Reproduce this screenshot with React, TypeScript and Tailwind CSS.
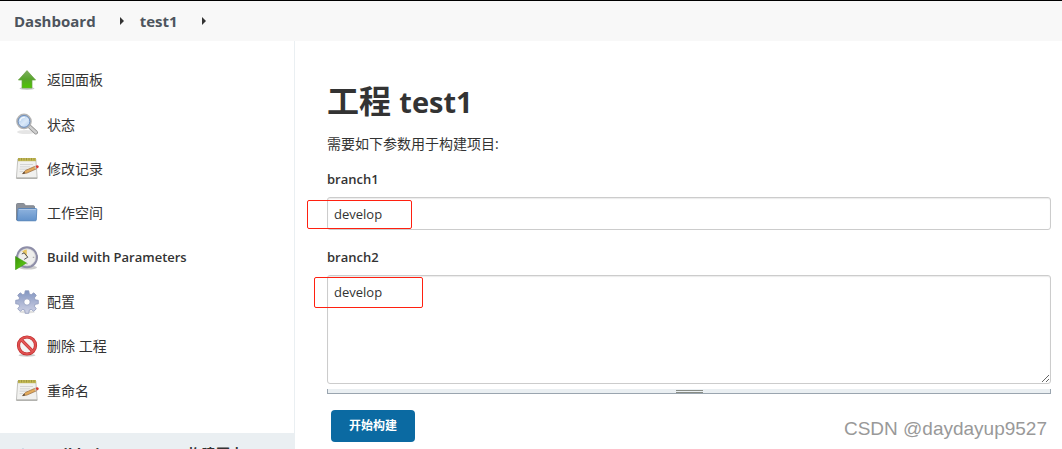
import type { ReactNode } from "react";

function ArrowUpIcon() {
  return (
    <svg className="size-6" viewBox="0 0 24 24" aria-hidden="true">
      <defs>
        <linearGradient id="up" x1="0" y1="0" x2="0" y2="1">
          <stop offset="0" stopColor="#7fae5f" />
          <stop offset="0.5" stopColor="#57a52a" />
          <stop offset="1" stopColor="#4fc700" />
        </linearGradient>
      </defs>
      <ellipse cx="12" cy="20.5" rx="7.5" ry="1.4" fill="#000" opacity="0.2" />
      <path d="M12 2.6 20.6 12H17v8H7v-8H3.4z" fill="url(#up)" stroke="#6ba348" strokeWidth="0.7" />
    </svg>
  );
}

function SearchIcon() {
  return (
    <svg className="size-6" viewBox="0 0 24 24" aria-hidden="true">
      <defs>
        <linearGradient id="lens" x1="0" y1="0" x2="1" y2="1">
          <stop offset="0" stopColor="#9cc1ea" />
          <stop offset="0.55" stopColor="#dbe9f9" />
          <stop offset="1" stopColor="#a3c4ea" />
        </linearGradient>
      </defs>
      <ellipse cx="11" cy="19" rx="9" ry="2" fill="#000" opacity="0.1" />
      <path d="m14.500 13.500 6.500 6" stroke="#8a8a8a" strokeWidth="4" strokeLinecap="round" />
      <path d="m14.500 13.500 6.500 6" stroke="#cfcfcf" strokeWidth="2.400" strokeLinecap="round" />
      <circle cx="9" cy="8.400" r="6.800" fill="url(#lens)" stroke="#b3b3b3" strokeWidth="2" />
      <circle cx="9" cy="8.400" r="5.900" fill="none" stroke="#6288bd" strokeWidth="0.9" />
      <path d="M5 8c.4-2.400 2.200-3.800 4.800-3.700" fill="none" stroke="#fff" strokeWidth="1.200" opacity="0.8" />
    </svg>
  );
}

function NotepadIcon() {
  return (
    <svg className="size-6" viewBox="0 0 24 24" aria-hidden="true">
      <path d="M2.800 2h18l1.400 19.300H1.400z" fill="#f1f1ef" stroke="#bdbdba" strokeWidth="0.9" />
      <path d="M1.500 20.500h20.600v1.200H1.500z" fill="#a5a5a1" />
      <path d="M3 1h18v3.200H3z" fill="#c3b955" />
      <path d="M4 1v2.400M6.500 1v2.400M9 1v2.400M11.500 1v2.400M14 1v2.400M16.500 1v2.400M19 1v2.400" stroke="#958d3c" strokeWidth="0.8" />
      <path d="M5 7.500h13M5 9.800h10M4.600 12.200h8M4.600 14.600h4" stroke="#cdcdcd" strokeWidth="0.8" />
      <path d="m7.500 16.700 3-3.300 9.700-4.200 1.300 2.600-9.600 4.300z" fill="#e3ab5c" stroke="#95663a" strokeWidth="0.7" />
      <path d="m7.500 16.700 1.700-2 .8 1.600z" fill="#333" />
      <path d="m20.500 8.900 1.400-.6c1.500-.5 2.600 1.900 1.200 2.600l-1.400.6z" fill="#d83b32" />
      <path d="m19.300 9.400 1.200-.5 1.200 2.600-1.200.5z" fill="#c7c8c9" />
    </svg>
  );
}

function FolderIcon() {
  return (
    <svg className="size-6" viewBox="0 0 24 24" aria-hidden="true">
      <defs>
        <linearGradient id="folder" x1="0" y1="0" x2="0" y2="1">
          <stop offset="0" stopColor="#8fb3de" />
          <stop offset="1" stopColor="#6292cb" />
        </linearGradient>
      </defs>
      <path d="M1.500 3.500c0-.6.4-1 1-1h6c.6 0 1 .4 1.200.9l.6 1.300h8.200c.6 0 1 .4 1 1V19h-18z" fill="#8c919a" stroke="#747a83" strokeWidth="0.8" />
      <path d="M3 8.400c0-.5.4-.9.900-.9h17c.5 0 .9.400.9.900l-.5 10.500c0 .5-.4.900-.9.900H3c-.6 0-1-.3-.9-.9z" fill="url(#folder)" stroke="#4d7eb8" strokeWidth="0.8" />
      <path d="M3.800 8.500h17" stroke="#b7cde9" strokeWidth="0.8" />
    </svg>
  );
}

function ClockPlayIcon() {
  return (
    <svg className="size-6" viewBox="0 0 24 24" aria-hidden="true">
      <defs>
        <linearGradient id="play" x1="0" y1="0" x2="1" y2="1">
          <stop offset="0" stopColor="#3a9208" />
          <stop offset="1" stopColor="#66d719" />
        </linearGradient>
      </defs>
      <ellipse cx="13" cy="21.500" rx="9" ry="2" fill="#000" opacity="0.2" />
      <circle cx="12" cy="11.300" r="9.900" fill="#eeeeec" stroke="#8e8ea8" strokeWidth="2.200" />
      <circle cx="12" cy="11.300" r="8.600" fill="none" stroke="#c6c6cc" strokeWidth="0.6" />
      <path d="M11.800 10.800 7.200 5.500C8.600 4.200 10 3.500 11.800 3.500z" fill="#e8c661" />
      <path d="m6.800 8 2.400-1.200 3.600 4.400-3.600 2.200" fill="none" stroke="#555" strokeWidth="1" />
      <path d="M19.300 11.300h-1.500M12 18.500V17" stroke="#999" strokeWidth="0.9" />
      <path d="M.5 10.500 11.500 17 .5 23.700z" fill="url(#play)" stroke="#3d9712" strokeWidth="0.6" />
    </svg>
  );
}

function GearIcon() {
  return (
    <svg className="size-6" viewBox="0 0 24 24" aria-hidden="true">
      <defs>
        <linearGradient id="gear" x1="0" y1="0" x2="0" y2="1">
          <stop offset="0" stopColor="#8296c1" />
          <stop offset="0.5" stopColor="#aab4d3" />
          <stop offset="1" stopColor="#d0d3e5" />
        </linearGradient>
      </defs>
      <ellipse cx="12" cy="22" rx="8" ry="1.500" fill="#000" opacity="0.12" />
      <path
        fillRule="evenodd"
        d="M10.200.8h3.600l.5 3.100 1.900.8 2.600-1.900 2.500 2.500-1.900 2.600.8 1.900 3.100.5v3.500l-3.100.5-.8 1.900 1.900 2.600-2.500 2.500-2.600-1.900-1.900.8-.5 3.100h-3.600l-.5-3.100-1.900-.8-2.600 1.900-2.500-2.500 1.900-2.600-.8-1.900-3.100-.5v-3.500l3.100-.5.800-1.900-1.900-2.600 2.500-2.500 2.600 1.900 1.900-.8zM12 8.800a3.200 3.200 0 1 0 0 6.400 3.200 3.200 0 0 0 0-6.400z"
        fill="url(#gear)"
        stroke="#8d98bb"
        strokeWidth="0.8"
      />
    </svg>
  );
}

function ForbiddenIcon() {
  return (
    <svg className="size-6" viewBox="0 0 24 24" aria-hidden="true">
      <ellipse cx="12" cy="21.300" rx="8.500" ry="1.400" fill="#000" opacity="0.2" />
      <circle cx="12" cy="11.500" r="8.500" fill="#f4f4f4" stroke="#bd2b2b" strokeWidth="3.200" />
      <path d="m6.200 5.700 11.600 11.600" stroke="#c93535" strokeWidth="3.200" />
      <circle cx="12" cy="11.500" r="8.500" fill="none" stroke="#e05050" strokeWidth="2" />
      <path d="m6.200 5.700 11.600 11.600" stroke="#e25858" strokeWidth="1.800" />
    </svg>
  );
}

type Task = { label: string; icon: ReactNode; active?: boolean };

const tasks: Task[] = [
  { label: "返回面板", icon: <ArrowUpIcon /> },
  { label: "状态", icon: <SearchIcon /> },
  { label: "修改记录", icon: <NotepadIcon /> },
  { label: "工作空间", icon: <FolderIcon /> },
  { label: "Build with Parameters", icon: <ClockPlayIcon />, active: true },
  { label: "配置", icon: <GearIcon /> },
  { label: "删除 工程", icon: <ForbiddenIcon /> },
  { label: "重命名", icon: <NotepadIcon /> },
];

function Caret() {
  return (
    <svg className="h-2 w-1" viewBox="0 0 4 8" aria-hidden="true">
      <path d="M0 0 4 4 0 8z" fill="#333" />
    </svg>
  );
}

function Breadcrumbs() {
  return (
    <nav className="flex h-[41px] shrink-0 items-center border-t border-black bg-[#f8f8f8] px-3.5 text-[15px] font-bold text-[#4d545d]">
      <ol className="flex items-center gap-4">
        <li className="flex items-center gap-6">
          <a href="#dashboard">Dashboard</a>
          <Caret />
        </li>
        <li className="flex items-center gap-6">
          <a href="#test1">test1</a>
          <Caret />
        </li>
      </ol>
    </nav>
  );
}

function Sidebar() {
  return (
    <aside className="flex w-[295px] shrink-0 flex-col border-r border-[#eaeff2] pt-[17px]">
      <ul className="grid h-[355px] shrink-0 grid-rows-8">
        {tasks.map((task) => (
          <li className="flex items-center" key={task.label}>
            <a
              className={task.active ? "flex items-center gap-2 px-[15px] text-[13px] font-semibold" : "flex items-center gap-2 px-[15px] text-sm"}
              href="#task"
            >
              {task.icon}
              {task.label}
            </a>
          </li>
        ))}
      </ul>
      <div className="mt-5 flex h-[41px] shrink-0 items-center gap-4 bg-[#eaeff2] px-[17px] text-sm font-bold">
        <svg className="size-3" viewBox="0 0 12 12" aria-hidden="true">
          <path d="m6 0 1.500 4.500H12L8.300 7.300 9.700 12 6 9.200 2.300 12l1.400-4.700L0 4.500h4.500z" fill="#3b78a8" />
        </svg>
        <span>Build History</span>
        <span className="ml-9">构建历史</span>
      </div>
    </aside>
  );
}

function BuildForm() {
  return (
    <form className="text-[13px]" onSubmit={(e) => e.preventDefault()}>
      <label className="mt-[15px] block leading-5 font-semibold" htmlFor="branch1">
        branch1
      </label>
      <div className="relative mt-2">
        <input
          className="block h-[33px] w-full rounded-[3px] border border-[#ccc] px-1.5 shadow-[inset_0_1px_1px_rgba(0,0,0,0.08)]"
          defaultValue="develop"
          id="branch1"
          type="text"
        />
        <div className="pointer-events-none absolute top-[3px] -left-5 z-10 h-[29px] w-[105px] rounded-xs border border-[#ff2010]" />
      </div>

      <label className="mt-[17px] block leading-5 font-semibold" htmlFor="branch2">
        branch2
      </label>
      <div className="relative mt-2">
        <textarea
          className="block h-[109px] w-full resize rounded-[3px] border border-[#ccc] px-1.5 py-1.5 leading-5 shadow-[inset_0_1px_1px_rgba(0,0,0,0.08)]"
          defaultValue="develop"
          id="branch2"
        />
        <div className="pointer-events-none absolute top-0.5 -left-[13px] z-10 h-[31px] w-[109px] rounded-xs border border-[#ff2010]" />
      </div>
      <div className="mt-[5px] flex h-[5px] justify-center border-x border-b border-[#9aa5af] bg-[#eaeff2]">
        <span className="mt-px h-[3px] w-[27px] border-y border-[#888c85]" />
      </div>

      <button
        className="mt-4 ml-1 h-8 rounded bg-[#0b6aa2] px-[18px] text-xs font-bold text-white"
        type="submit"
      >
        开始构建
      </button>
    </form>
  );
}

export default function App() {
  return (
    <div className="relative flex h-screen flex-col overflow-hidden bg-white font-['Open_Sans','Noto_Sans_CJK_SC',sans-serif] text-[#333]">
      <Breadcrumbs />
      <div className="flex min-h-0 flex-1">
        <Sidebar />
        <main className="min-w-0 flex-1 pt-[39px] pr-[11px] pl-8">
          <h1 className="text-[32px] leading-[42px] font-bold">
            工程 <span className="text-[29px]">test1</span>
          </h1>
          <p className="mt-[11px] text-sm leading-5">需要如下参数用于构建项目:</p>
          <BuildForm />
        </main>
      </div>
      <p className="pointer-events-none absolute right-[15px] bottom-1.5 font-['Liberation_Sans',sans-serif] text-[19px] leading-7 text-[#999]">
        CSDN @daydayup9527
      </p>
    </div>
  );
}
